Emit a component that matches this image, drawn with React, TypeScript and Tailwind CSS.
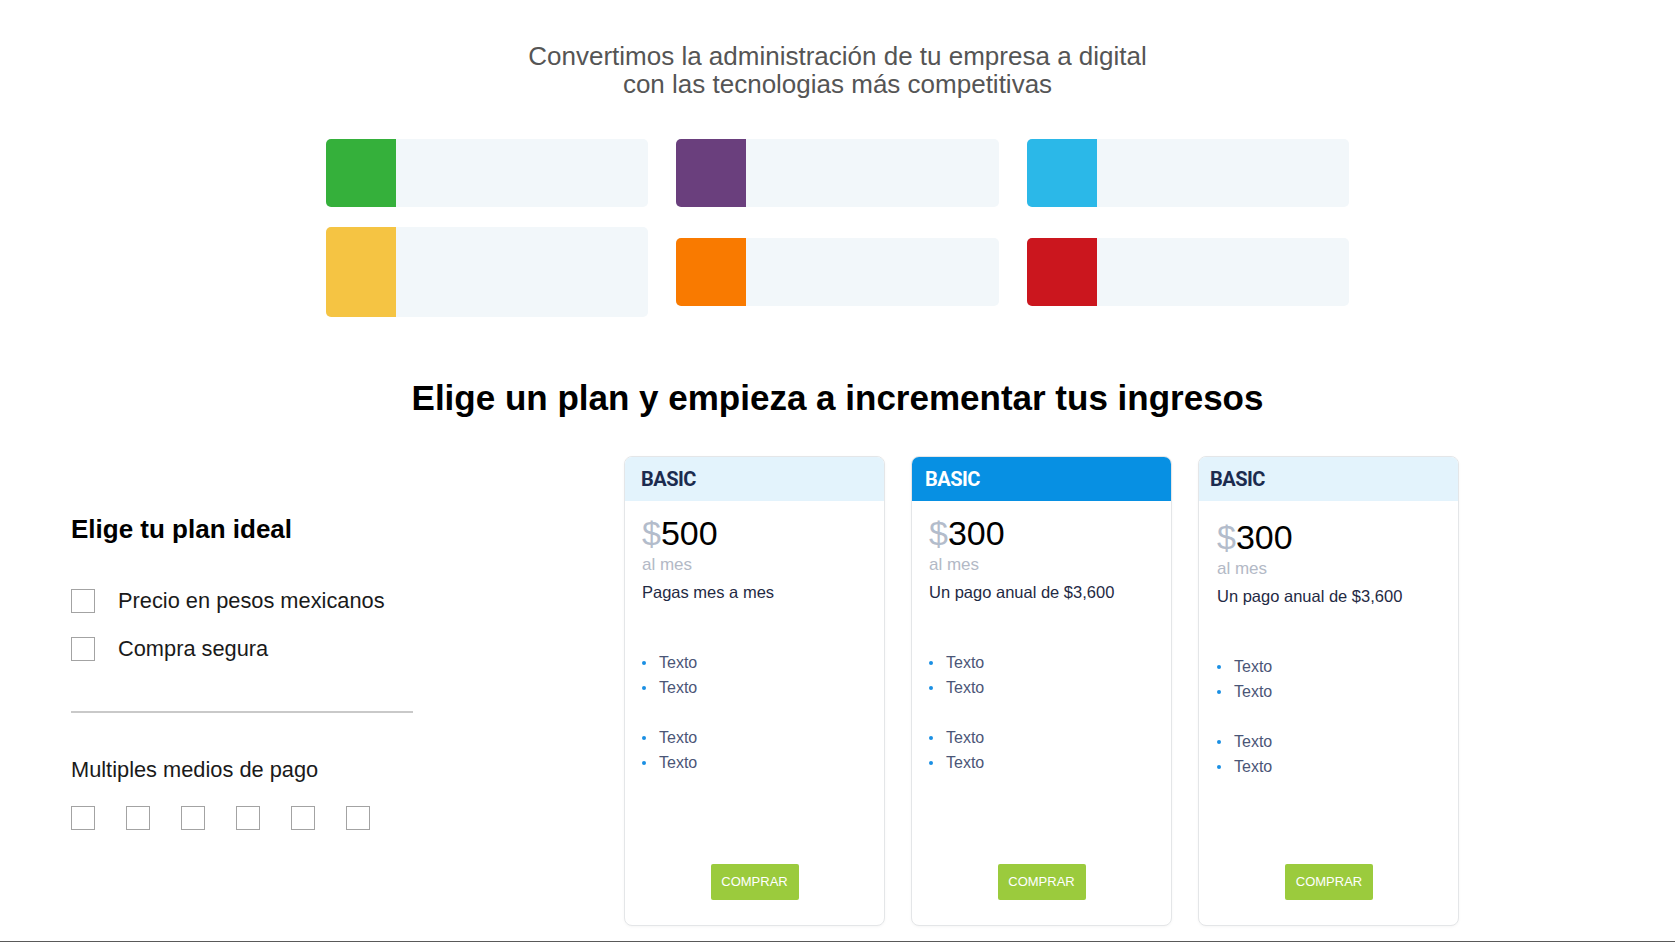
import React from 'react';

type Plan = {
  price: string;
  note: string;
  highlight?: boolean;
  headPad: string;
  bodyPad: string;
};

const tiles = [
  { color: 'bg-[#35b03b]', tall: false },
  { color: 'bg-[#6a3f7d]', tall: false },
  { color: 'bg-[#2bb8e8]', tall: false },
  { color: 'bg-[#f5c443]', tall: true },
  { color: 'bg-[#f97a00]', tall: false },
  { color: 'bg-[#cb161e]', tall: false }
];

const plans: Plan[] = [
  { price: '500', note: 'Pagas mes a mes', headPad: 'pl-[16px]', bodyPad: 'pl-[17px] pt-[14px]' },
  { price: '300', note: 'Un pago anual de $3,600', highlight: true, headPad: 'pl-[13px]', bodyPad: 'pl-[17px] pt-[14px]' },
  { price: '300', note: 'Un pago anual de $3,600', headPad: 'pl-[11px]', bodyPad: 'pl-[18px] pt-[18px]' }
];

function Box() {
  return <span className="block h-[24px] w-[24px] shrink-0 border border-[#a3a3a3] bg-white" />;
}

function Bullets({ items }: { items: string[] }) {
  return (
    <ul>
      {items.map((t, i) => (
        <li key={i} className="flex h-[25px] items-center gap-[13px] text-[16px] text-[#4b5677]">
          <span className="block h-[4px] w-[4px] rounded-full bg-[#1a8fe3]" />
          {t}
        </li>
      ))}
    </ul>
  );
}

function PlanCard({ plan }: { plan: Plan }) {
  return (
    <div className="flex h-[470px] w-[261px] flex-col overflow-hidden rounded-[8px] border border-[#e4e6e8] bg-white shadow-[0_1px_3px_rgba(0,0,0,0.04)]">
      <div
        className={
          plan.highlight
            ? `flex h-[44px] items-center bg-[#0790e3] ${plan.headPad}`
            : `flex h-[44px] items-center bg-[#e3f3fc] ${plan.headPad}`
        }
      >
        <span
          className={
            plan.highlight
              ? "font-['Roboto',sans-serif] text-[20px] font-bold tracking-[-0.5px] text-white"
              : "font-['Roboto',sans-serif] text-[20px] font-bold tracking-[-0.5px] text-[#1c2b4f]"
          }
        >
          BASIC
        </span>
      </div>
      <div className={`flex flex-1 flex-col pb-[25px] pr-[17px] ${plan.bodyPad}`}>
        <p className="text-[34px] leading-[36px] text-black">
          <span className="text-[#b3bccb]">$</span>
          {plan.price}
        </p>
        <p className="mt-[4px] text-[17px] leading-[20px] text-[#b3b9c6]">al mes</p>
        <p className="mt-[5px] text-[16.5px] text-[#1f2a44]">{plan.note}</p>
        <div className="mt-[46px]">
          <Bullets items={['Texto', 'Texto']} />
          <div className="mt-[25px]">
            <Bullets items={['Texto', 'Texto']} />
          </div>
        </div>
        <div className="mt-auto flex justify-center">
          <button
            type="button"
            className="h-[36px] w-[88px] rounded-[2px] bg-[#9bcb3d] text-[13px] text-white"
          >
            COMPRAR
          </button>
        </div>
      </div>
    </div>
  );
}

export default function App() {
  return (
    <div className="min-h-[942px] w-full bg-white font-['Liberation_Sans',Arial,sans-serif]">
      <section className="pt-[42px] text-center text-[26px] leading-[28px] text-[#555555]">
        <p>Convertimos la administración de tu empresa a digital</p>
        <p>con las tecnologias más competitivas</p>
      </section>

      <div className="mx-auto mt-[41px] grid w-[1023px] grid-cols-3 items-center gap-x-[28px] gap-y-[20px]">
        {tiles.map((t, i) => (
          <div
            key={i}
            className={
              t.tall
                ? 'flex h-[90px] overflow-hidden rounded-[5px] bg-[#f2f7fa]'
                : 'flex h-[68px] overflow-hidden rounded-[5px] bg-[#f2f7fa]'
            }
          >
            <div className={`w-[70px] ${t.color}`} />
          </div>
        ))}
      </div>

      <h1 className="mt-[55px] text-center text-[35px] font-bold text-black">
        Elige un plan y empieza a incrementar tus ingresos
      </h1>

      <section className="mt-[31px] flex">
        <div className="w-[624px] shrink-0 pl-[71px] pt-[54px]">
          <h2 className="text-[26px] font-bold text-black">Elige tu plan ideal</h2>
          <div className="mt-[40px] flex h-[25px] items-center gap-[23px] text-[21.8px] text-[#1a1a1a]">
            <Box />
            <span>Precio en pesos mexicanos</span>
          </div>
          <div className="mt-[23px] flex h-[25px] items-center gap-[23px] text-[21.8px] text-[#1a1a1a]">
            <Box />
            <span>Compra segura</span>
          </div>
          <div className="mt-[49px] h-[2px] w-[342px] bg-[#c9c9c9]" />
          <p className="mt-[41px] text-[21.8px] text-[#1a1a1a]">Multiples medios de pago</p>
          <div className="mt-[20px] flex gap-[31px]">
            <Box />
            <Box />
            <Box />
            <Box />
            <Box />
            <Box />
          </div>
        </div>
        <div className="flex gap-[26px]">
          {plans.map((p, i) => (
            <PlanCard key={i} plan={p} />
          ))}
        </div>
      </section>

      <footer className="mt-[15px] h-[40px] border-t-2 border-[#595959]" />
    </div>
  );
}
